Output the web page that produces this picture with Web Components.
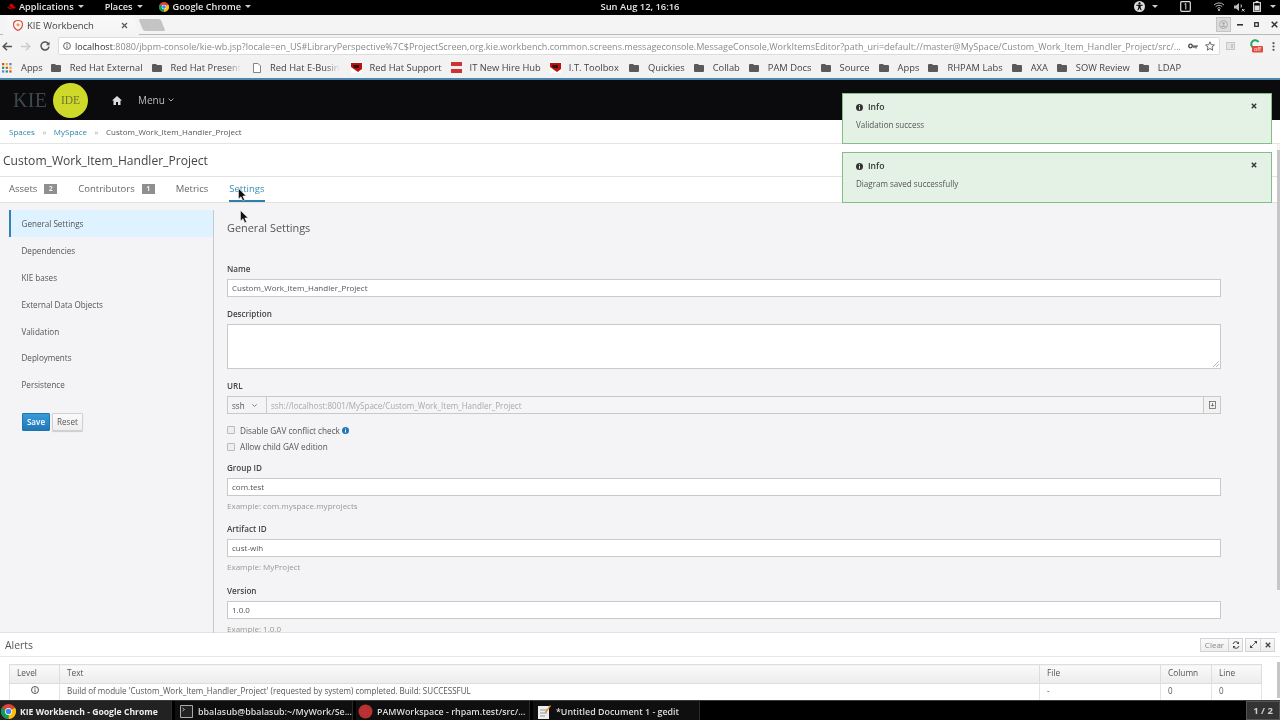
<!DOCTYPE html>
<html lang="en"><head><meta charset="utf-8"><title>KIE Workbench</title>
<style>
html,body{margin:0;padding:0;width:1280px;height:720px;overflow:hidden;background:#fff}
body{font-family:"Open Sans","Liberation Sans",sans-serif;font-size:9px;color:#444;display:flex;flex-direction:column;position:relative;filter:blur(.3px)}
</style></head><body>
<gnome-bar></gnome-bar>
<chrome-tabs></chrome-tabs>
<chrome-toolbar></chrome-toolbar>
<bookmarks-bar></bookmarks-bar>
<kie-header></kie-header>
<kie-breadcrumbs></kie-breadcrumbs>
<project-area></project-area>
<alerts-panel></alerts-panel>
<task-bar></task-bar>
<toast-stack>
  <info-toast>Validation success</info-toast>
  <info-toast>Diagram saved successfully</info-toast>
</toast-stack>
<mouse-cursor style="left:238px;top:188px"></mouse-cursor>
<mouse-cursor style="left:240px;top:210px"></mouse-cursor>
<script>
const CHROME='<svg width="W" height="W" viewBox="0 0 24 24"><circle cx="12" cy="12" r="12" fill="#db4437"/><path d="M12 12L22.4 6A12 12 0 0 1 12 24z" fill="#f4c20d"/><path d="M12 12L12 24A12 12 0 0 1 1.6 6z" fill="#0f9d58"/><circle cx="12" cy="12" r="5.6" fill="#fff"/><circle cx="12" cy="12" r="4.4" fill="#4285f4"/></svg>';
const HAT='<svg width="W" height="W" viewBox="0 0 24 24"><path d="M6 12l2-7c2-1 3 0 4 0s3-1 4 0l2 6c3 1 5 3 5 5 0 2-3 2-6 1-4-1-9-3-11-5z" fill="#cc0000"/><path d="M1 13c0 3 7 7 13 7 2 0 3-1 3-2-5 0-12-3-14-6z" fill="#b00"/></svg>';
const FOLDER='<svg width="10" height="8" viewBox="0 0 10 8"><path d="M0 1a1 1 0 0 1 1-1h3l1 1h4a1 1 0 0 1 1 1v5a1 1 0 0 1-1 1H1a1 1 0 0 1-1-1z" fill="#5a5a5a"/></svg>';
function def(name,css,html,init){
  customElements.define(name,class extends HTMLElement{
    constructor(){super();const r=this.attachShadow({mode:'open'});r.innerHTML='<style>'+css+'</style>'+html;if(init)init(r,this);}
  });
}
def('gnome-bar',`:host{display:grid;grid-template-columns:1fr auto 1fr;align-items:center;height:15px;box-sizing:border-box;padding-bottom:2px;background:#000;color:#e6e6e6;font:600 9.2px "Open Sans",sans-serif;flex:none}
.l{display:flex;align-items:center}.r{display:flex;align-items:center;justify-content:flex-end;height:13px}
.c{font-size:9.4px;position:relative}
i{display:inline-block;width:0;height:0;border:3px solid transparent;border-top:3.5px solid #ccc;border-bottom:0;margin-left:4px}
svg{display:block}`,
`<div class="l"><span style="margin-left:7px;margin-right:3px">${HAT.replace(/W/g,'9')}</span>Applications<i></i><span style="margin-left:21px">Places</span><i></i><span style="margin-left:16px;margin-right:4px">${CHROME.replace(/W/g,'10')}</span>Google Chrome<i></i></div>
<div class="c">Sun Aug 12, 16:16</div>
<div class="r">
<svg width="11" height="11" viewBox="0 0 12 12"><circle cx="6" cy="6" r="6" fill="#ddd"/><circle cx="6" cy="2.6" r="1.2" fill="#000"/><path d="M2.5 4.2h7v1H7.2v2l1.2 3H7.3L6 7.6 4.7 10.200H3.600l1.200-3v-2H2.500z" fill="#000"/></svg><i style="margin-left:7px"></i>
<svg style="margin-left:22px" width="11" height="11" viewBox="0 0 11 11"><rect x=".7" y=".7" width="9.600" height="9.600" rx="1" fill="none" stroke="#ddd" stroke-width="1.200"/><path d="M4.500 3.200l1.300-.7v6" fill="none" stroke="#ddd"/></svg>
<svg style="margin-left:23px" width="10" height="9" viewBox="0 0 10 9"><path d="M0 3a7 7 0 0 1 10 0M1.700 4.700a4.600 4.600 0 0 1 6.600 0M3.400 6.400a2.200 2.200 0 0 1 3.200 0" fill="none" stroke="#bbb"/><circle cx="5" cy="8" r="1" fill="#ddd"/></svg>
<svg style="margin-left:10px" width="11" height="10" viewBox="0 0 11 10"><path d="M0 3.500h2L5 1v8L2 6.500H0z" fill="#bbb"/><path d="M7 2.500a3 3 0 0 1 0 3M8 7l2.500 2.500M10.500 7L8 9.500" stroke="#ddd" fill="none"/></svg>
<svg style="margin-left:8px" width="8" height="11" viewBox="0 0 8 11"><rect x=".6" y="1.600" width="6.800" height="8.800" fill="none" stroke="#ddd" stroke-width="1.100"/><rect x="2.600" y="0" width="2.800" height="1.600" fill="#ddd"/><rect x="1.500" y="4.500" width="5" height="5" fill="#ddd"/></svg>
<i style="margin-left:9px;margin-right:4px"></i></div>`);

def('chrome-tabs',`:host{display:flex;align-items:flex-end;height:20px;background:#f4f4f4;border-bottom:1px solid #b9b9b9;box-sizing:border-box;flex:none;position:relative;font:9.5px "Open Sans",sans-serif;color:#444}
.tab{width:136px;height:19px;margin-left:3px;margin-bottom:-1px;display:flex;align-items:center;background:linear-gradient(#f9f9f9,#f4f4f4);clip-path:polygon(0 100%,5px 0,131px 0,136px 100%);position:relative;flex:none}
.new{width:22px;height:12px;background:#c4c4c4;transform:skewX(22deg);border-radius:2px;margin:0 0 3px 2px;flex:none}
.sp{flex:1}.win{display:flex;align-items:center;height:19px;padding-right:2px;color:#333}
.p{width:13px;height:13px;background:#dcdcdc;border:1px solid #c4c4c4;display:flex;align-items:center;justify-content:center}`,
`<div class="tab"><svg style="margin-left:10px;margin-right:4px" width="10" height="11" viewBox="0 0 10 11"><path d="M5 .5c3 0 4.500 2 4.500 4 0 2.500-2.500 5-4.500 6-2-1-4.500-3.500-4.500-6 0-2 1.500-4 4.500-4z" fill="none" stroke="#d9534f" stroke-width="1.200"/><circle cx="5" cy="4.800" r="1.600" fill="#e8a33a"/></svg>KIE Workbench<svg style="margin-left:27px" width="7" height="7" viewBox="0 0 7 7"><path d="M1 1l5 5M6 1L1 6" stroke="#555" stroke-width="1.200"/></svg></div><div class="new"></div><div class="sp"></div>
<div class="win"><div class="p"><svg width="9" height="9" viewBox="0 0 9 9"><circle cx="4.500" cy="4.500" r="4" fill="none" stroke="#aaa"/><circle cx="4.500" cy="3.400" r="1.300" fill="#aaa"/><path d="M2 7c1-2 4-2 5 0" fill="#aaa"/></svg></div>
<svg style="margin-left:6px" width="6" height="3" viewBox="0 0 6 3"><rect width="6" height="1.600" y="1" fill="#333"/></svg>
<svg style="margin-left:11px" width="5" height="5" viewBox="0 0 5 5"><rect x=".7" y=".7" width="3.600" height="3.600" fill="none" stroke="#333" stroke-width="1.300"/></svg>
<svg style="margin-left:12px" width="7" height="7" viewBox="0 0 7 7"><path d="M.7.700l5.600 5.600M6.300.7L.7 6.300" stroke="#333" stroke-width="1.500"/></svg></div>`);

def('chrome-toolbar',`:host{display:flex;align-items:center;height:22px;background:#f3f3f3;flex:none;font:9.05px "Open Sans",sans-serif}
.nav{width:58px;flex:none;display:flex;align-items:center}
.addr{width:1162px;height:18px;background:#fff;border:1px solid #dcdcdc;border-radius:2px;box-sizing:border-box;display:flex;align-items:center;flex:none}
.u{flex:1;min-width:0;white-space:nowrap;color:#8a8a8a;margin-left:4px}.u b{font-weight:400;color:#333}
.end{display:flex;align-items:center;flex:none}`,
`<div class="nav"><svg style="margin-left:2px" width="10" height="9" viewBox="0 0 10 9"><path d="M10 4.500H1.500M5 .8L1.200 4.500 5 8.200" fill="none" stroke="#555" stroke-width="1.500"/></svg>
<svg style="margin-left:9px" width="10" height="9" viewBox="0 0 10 9"><path d="M0 4.500h8.500M5 .8l3.800 3.700L5 8.200" fill="none" stroke="#ccc" stroke-width="1.500"/></svg>
<svg style="margin-left:9px" width="10" height="10" viewBox="0 0 10 10"><path d="M8.700 3.300A4 4 0 1 0 9 5.500" fill="none" stroke="#555" stroke-width="1.500"/><path d="M9.500 .8v3.500H6z" fill="#555"/></svg></div>
<div class="addr"><svg style="margin-left:4px;flex:none" width="8" height="8" viewBox="0 0 8 8"><circle cx="4" cy="4" r="3.400" fill="none" stroke="#555" stroke-width=".9"/><path d="M4 3.400v2.600M4 1.800v1" stroke="#555" stroke-width=".9"/></svg><div class="u"><b>localhost</b>:8080/jbpm-console/kie-wb.jsp?locale=en_US#LibraryPerspective%7C$ProjectScreen,org.kie.workbench.common.screens.messageconsole.MessageConsole,WorkItemsEditor?path_uri=default://master@MySpace/Custom_Work_Item_Handler_Project/src/...</div>
<div class="end"><svg width="10" height="6" viewBox="0 0 10 6"><circle cx="2.500" cy="3" r="1.800" fill="none" stroke="#444" stroke-width="1.300"/><path d="M4.500 3H10M8 3v2.500M6 3v2" stroke="#444" stroke-width="1.200"/></svg><svg style="margin:0 4px 0 7px" width="10" height="10" viewBox="0 0 10 10"><path d="M5 .8l1.250 2.900 3.150.3-2.400 2.050.75 3.100L5 7.500 2.250 9.150 3 6.050.6 4l3.150-.3z" fill="none" stroke="#555" stroke-width=".9"/></svg></div></div>
<svg style="margin-left:6px" width="9" height="8" viewBox="0 0 9 8"><rect x=".5" y=".5" width="8" height="7" fill="#e4e4e4" stroke="#c6c6c6"/><rect x="5" y="2" width="2" height="4" fill="#c6c6c6"/></svg>
<svg style="margin-left:13px" width="15" height="14" viewBox="0 0 15 14"><path d="M10.500 3A4 4 0 1 0 10.500 7.500" fill="none" stroke="#22a565" stroke-width="2"/><rect x="4" y="7" width="11" height="6.500" rx="1" fill="#e04b42"/><text x="9.500" y="12" font-size="5.500" fill="#fff" text-anchor="middle" font-family="Open Sans">off</text></svg>
<svg style="margin-left:9px" width="3" height="9" viewBox="0 0 3 9"><circle cx="1.500" cy="1.200" r="1.100" fill="#555"/><circle cx="1.500" cy="4.500" r="1.100" fill="#555"/><circle cx="1.500" cy="7.800" r="1.100" fill="#555"/></svg>`);

def('bookmarks-bar',`:host{display:flex;align-items:center;height:21px;background:#f2f2f2;border-bottom:2px solid #4a86ad;flex:none;font:9.35px "Open Sans",sans-serif;color:#444;box-shadow:0 1px 0 #aac}
.b{display:flex;align-items:center;white-space:nowrap;margin-left:9px;flex:none}.b svg{margin-right:9px;flex:none;display:block}
.f{display:block;-webkit-mask-image:linear-gradient(90deg,#000 80%,transparent);mask-image:linear-gradient(90deg,#000 80%,transparent)}`,
'',(r)=>{
 const RH='<svg width="11" height="11" viewBox="0 0 11 11" style="margin-right:8px"><rect width="11" height="11" fill="#fff"/><path d="M0 1h11v6L7 10 0 5z" fill="#b11"/><path d="M2 3h6v3H3z" fill="#311"/></svg>';
 const NOW='<svg width="11" height="11" viewBox="0 0 11 11" style="margin-right:8px"><rect width="11" height="11" fill="#c33"/><rect y="4" width="11" height="3" fill="#eee"/></svg>';
 const DOC='<svg width="8" height="10" viewBox="0 0 8 10" style="margin-left:3px"><path d="M.5.500h4.500l2.500 2.500v6.500h-7z" fill="#fff" stroke="#666" stroke-width=".8"/></svg>';
 const APPS='<svg width="10" height="10" viewBox="0 0 9 9">'+[0,1,2].flatMap(a=>[0,1,2].map(b=>`<rect x="${b*3.3}" y="${a*3.3}" width="2" height="2" fill="${['#db4437','#f4b400','#4285f4','#0f9d58','#db4437','#f4b400','#4285f4','#0f9d58','#db4437'][a*3+b]}"/>`)).join('')+'</svg>';
 const items=[[APPS,'Apps',0,2],[FOLDER,'Red Hat External',0,8],[FOLDER,'Red Hat Present',1,9],[DOC,'Red Hat E-Busin',1,9],[RH,'Red Hat Support',0,11],[NOW,'IT New Hire Hub',0,9],[RH,'I.T. Toolbox',0,9],[FOLDER,'Quickies',0,10],[FOLDER,'Collab',0,9],[FOLDER,'PAM Docs',0,9],[FOLDER,'Source',0,9],[FOLDER,'Apps',0,9],[FOLDER,'RHPAM Labs',0,9],[FOLDER,'AXA',0,9],[FOLDER,'SOW Review',0,9],[FOLDER,'LDAP',0,9]];
 r.innerHTML+=items.map(([i,t,w,m])=>`<div class="b" style="margin-left:${m}px">${i}<span class="${w?'f':''}">${t}</span></div>`).join('');
});

def('kie-header',`:host{display:flex;align-items:center;height:40px;background:#0b0b0d;flex:none;color:#ccc;font:10px "Open Sans",sans-serif}
.k{font:20px "Liberation Serif",serif;color:#3d484c;margin-left:13px;width:35px;letter-spacing:.3px}
.i{width:35px;height:35px;border-radius:50%;background:#ced92a;margin-left:5px;display:flex;align-items:center;justify-content:center;font:11.500px "Liberation Serif",serif;color:#6d7532}
.m{margin-left:16px;display:flex;align-items:center;color:#bbb}`,
`<div class="k">KIE</div><div class="i">IDE</div><svg style="margin-left:24px" width="10" height="9" viewBox="0 0 10 9"><path d="M5 0L0 4.500h1.500V9h2.500V6h2v3h2.500V4.500H10z" fill="#ddd"/></svg><div class="m">Menu<svg style="margin-left:3px" width="6" height="4" viewBox="0 0 6 4"><path d="M.6.600L3 3l2.400-2.400" fill="none" stroke="#aaa"/></svg></div>`);

def('kie-breadcrumbs',`:host{display:flex;align-items:center;height:24px;box-sizing:border-box;background:#fff;border-bottom:1px solid #e4e4e4;flex:none;padding:0 0 0 9px;font:8px "Open Sans",sans-serif;color:#555}
a{color:#2f87a8}s{text-decoration:none;color:#aaa;margin:0 7.5px;font-size:8px}`,
`<a>Spaces</a><s>&raquo;</s><a>MySpace</a><s>&raquo;</s><span>Custom_Work_Item_Handler_Project</span>`);

def('project-tabs',`:host{display:flex;height:26px;box-sizing:border-box;border-bottom:1px solid #e2e2e2;background:#fff;flex:none;font:9.5px "Open Sans",sans-serif;color:#666;padding-left:9px}
.t{display:flex;align-items:center;height:25px;margin-right:21px;box-sizing:border-box;padding-bottom:2px}
.t b{font:700 7px "Open Sans",sans-serif;background:#8f8f8f;color:#eee;width:13px;height:10px;margin-left:7px;display:flex;align-items:center;justify-content:center}
.a{color:#3a8fb7;border-bottom:2px solid #2f7fa8;padding-bottom:0;height:25px}`,
`<div class="t">Assets<b>2</b></div><div class="t">Contributors<b>1</b></div><div class="t">Metrics</div><div class="t a">Settings</div>`);

def('side-nav',`:host{display:block;width:214px;box-sizing:border-box;flex:none;padding-top:7px;font:8.1px "Open Sans",sans-serif;color:#555}
.list{margin-left:9px;border-right:1px solid #c9c9c9;height:426px;box-sizing:border-box}
.n{height:26.800px;display:flex;align-items:center;padding-left:12.500px;box-sizing:border-box}
.n.a{background:#def3ff;border-left:2px solid #2f83b5;padding-left:10.500px;height:27.300px}
.btns{display:flex;gap:2px;margin:14.700px 0 0 13px}
.btn{height:18px;display:flex;align-items:center;justify-content:center;box-sizing:border-box;border-radius:1px}
.s{width:28px;color:#fff;background:linear-gradient(#3a9ad9,#1f78b8);font-weight:600;border:1px solid #2272ac}
.r{width:31px;color:#555;background:linear-gradient(#fafafa,#eee);border:1px solid #d0d0d0;box-shadow:0 1px 1px #ccc}`,
`<div class="list"><div class="n a">General Settings</div><div class="n">Dependencies</div><div class="n">KIE bases</div><div class="n">External Data Objects</div><div class="n">Validation</div><div class="n">Deployments</div><div class="n">Persistence</div><div class="btns"><div class="btn s">Save</div><div class="btn r">Reset</div></div></div>`);

def('form-field',`:host{display:block;font:8.1px "Open Sans",sans-serif;color:#444}
label{display:block;font-weight:600;height:11px;line-height:11px;margin-bottom:5px;color:#444}
.h{font:400 8px "Open Sans",sans-serif;color:#999;height:11px;line-height:11px;margin-top:4px}`,
`<label></label><slot></slot><div class="h"></div>`,
(r,el)=>{queueMicrotask(()=>{r.querySelector('label').textContent=el.getAttribute('label')||'';const h=r.querySelector('.h');const t=el.getAttribute('hint');if(t)h.textContent=t;else h.remove();});});

def('text-input',`:host{display:block;height:18px;box-sizing:border-box;background:#fff;border:1px solid #c9c9c9;padding-left:4px;font:8px/16px "Open Sans",sans-serif;color:#555;white-space:nowrap;overflow:hidden}`,`<slot></slot>`);

def('check-row',`:host{display:flex;align-items:center;height:16.500px;font:8.2px "Open Sans",sans-serif;color:#555}
i{width:6px;height:6px;border:1px solid #bbb;background:#eee;border-radius:1px;margin-right:5px;flex:none}`,`<i></i><slot></slot>`);

def('settings-form',`:host{display:block;flex:1;min-width:0;padding:0 56px 0 13px;overflow:hidden;height:430px;box-sizing:border-box}
h2{font:400 10.900px "Open Sans",sans-serif;color:#555;margin:0;padding-top:18px;line-height:14px;height:14px;margin-bottom:28px}
form-field{margin-bottom:11px}
form-field.hint{margin-bottom:13px}
form-field.hint.first{margin-bottom:12px}
.ta{height:45px;background:#fff;border:1px solid #c9c9c9;box-sizing:border-box;position:relative}
.ta svg{position:absolute;right:1px;bottom:1px}
.url{display:flex;height:18px;font:8.05px "Open Sans",sans-serif}
.sel{width:40px;box-sizing:border-box;border:1px solid #c9c9c9;background:#f4f3f5;color:#555;display:flex;align-items:center;padding-left:4px;flex:none}
.val{flex:1;border:1px solid #c9c9c9;border-left:0;background:#f5f4f6;color:#aaa;padding-left:4px;display:flex;align-items:center}
.cp{width:16px;flex:none;border:1px solid #c9c9c9;border-left:0;background:#f2f2f2;display:flex;align-items:center;justify-content:center}
.checks{margin:8px 0 7px}
.checks svg{margin-left:2px}
.u{margin-bottom:0}`,
`<h2>General Settings</h2>
<form-field label="Name"><text-input>Custom_Work_Item_Handler_Project</text-input></form-field>
<form-field label="Description"><div class="ta"><svg width="6" height="6" viewBox="0 0 6 6"><path d="M0 6l6-6M3 6l3-3" stroke="#999" stroke-width=".7"/></svg></div></form-field>
<form-field class="u" label="URL"><div class="url"><div class="sel">ssh<svg style="margin-left:7px" width="5" height="3" viewBox="0 0 5 3"><path d="M.3.300L2.500 2.500 4.700.3" fill="none" stroke="#666" stroke-width=".8"/></svg></div><div class="val">ssh://localhost:8001/MySpace/Custom_Work_Item_Handler_Project</div><div class="cp"><svg width="7" height="8" viewBox="0 0 7 8"><rect x=".5" y=".5" width="6" height="7" fill="none" stroke="#666" stroke-width=".8"/><path d="M3.500 2v3.500M2 4.500h3" stroke="#666" stroke-width=".8"/></svg></div></div></form-field>
<div class="checks"><check-row>Disable GAV conflict check<svg width="7" height="7" viewBox="0 0 7 7"><circle cx="3.500" cy="3.500" r="3.500" fill="#1f78b8"/><path d="M3.500 3v2.500M3.500 1.500v.9" stroke="#fff"/></svg></check-row><check-row>Allow child GAV edition</check-row></div>
<form-field class="hint first" label="Group ID" hint="Example: com.myspace.myprojects"><text-input>com.test</text-input></form-field>
<form-field class="hint" label="Artifact ID" hint="Example: MyProject"><text-input>cust-wih</text-input></form-field>
<form-field class="hint" label="Version" hint="Example: 1.0.0"><text-input>1.0.0</text-input></form-field>`);

def('project-area',`:host{display:flex;flex:none;height:489px;background:#fff}
.col{flex:1;min-width:0;display:flex;flex-direction:column}
h1{margin:0;font:400 12.100px "Open Sans",sans-serif;color:#444;height:33px;line-height:33px;padding-left:3px;border-bottom:1px solid #e2e2e2;box-sizing:border-box;flex:none}
.main{flex:1;display:flex;background:#f4f3f5;border-bottom:1px solid #e2e2e2;min-height:0}
.sb{width:3px;background:#f4f3f5;flex:none;display:flex;flex-direction:column}
.th{height:440px;margin-top:6px;background:#c6c6c6}`,
`<div class="col"><h1>Custom_Work_Item_Handler_Project</h1><project-tabs></project-tabs><div class="main"><side-nav></side-nav><settings-form></settings-form></div></div><div class="sb"><div class="th"></div></div>`);

def('alerts-panel',`:host{display:flex;flex-direction:column;height:67px;background:#fff;flex:none;font:8.3px "Open Sans",sans-serif;color:#555;position:relative;overflow:hidden}
.hd{display:flex;align-items:center;height:24px;box-sizing:border-box;border-bottom:1px solid #e6e6e6;padding:0 5px;flex:none}
.ti{font-size:10.400px;color:#555;flex:1}
.g{display:flex;height:14px;margin-left:3px}
.bt{border:1px solid #d4d4d4;background:linear-gradient(#fafafa,#eee);display:flex;align-items:center;justify-content:center;box-sizing:border-box;margin-left:-1px;color:#888;font-size:8px}
table{border-collapse:collapse;table-layout:fixed;width:1252px;margin:7px 0 0 9px}
th{height:19px;font-weight:400;text-align:left;padding:0 0 3px 7px;background:linear-gradient(#fafafa,#ececec);border:1px solid #ddd;color:#555;box-sizing:border-box}
td{height:17px;padding:0 0 3px 7px;border:1px solid #e4e4e4;border-bottom:0;box-sizing:border-box;color:#555;font-size:8.050px;white-space:nowrap}
.sb{position:absolute;right:0;top:29px;width:3px;height:36px;background:#c6c6c6}`,
`<div class="hd"><div class="ti">Alerts</div><div class="g"><div class="bt" style="width:29px">Clear</div><div class="bt" style="width:15px"><svg width="8" height="8" viewBox="0 0 8 8"><path d="M1 3a3 3 0 0 1 5.500-.8M7 5a3 3 0 0 1-5.500.8" fill="none" stroke="#444"/><path d="M7 .5v2.500H4.500zM1 7.500V5h2.500z" fill="#444"/></svg></div></div><div class="g"><div class="bt" style="width:16px"><svg width="7" height="7" viewBox="0 0 7 7"><path d="M1 6l5-5" stroke="#444" stroke-width=".8"/><path d="M7 0v3L4 0zM0 7V4l3 3z" fill="#444"/></svg></div><div class="bt" style="width:15px"><svg width="6" height="6" viewBox="0 0 6 6"><path d="M.8.800l4.400 4.400M5.200.8L.8 5.200" stroke="#444" stroke-width="1.300"/></svg></div></div></div>
<table><colgroup><col style="width:50px"><col style="width:980px"><col style="width:121px"><col style="width:51px"><col style="width:50px"></colgroup>
<tr><th>Level</th><th>Text</th><th>File</th><th>Column</th><th>Line</th></tr>
<tr><td style="padding:0 0 3px;text-align:center"><svg width="8" height="8" viewBox="0 0 8 8"><circle cx="4" cy="4" r="3.500" fill="none" stroke="#444" stroke-width=".9"/><path d="M4 3.300V6.200M4 1.800v.9" stroke="#444" stroke-width=".9"/></svg></td><td>Build of module 'Custom_Work_Item_Handler_Project' (requested by system) completed. Build: SUCCESSFUL</td><td>-</td><td>0</td><td>0</td></tr></table>
<div class="sb"></div>`);

def('task-bar',`:host{display:flex;align-items:center;height:20px;background:#000;border-top:1px solid #3a3a3a;box-sizing:border-box;flex:none;color:#ddd;font:600 8.900px "Open Sans",sans-serif;position:relative}
.it{margin-right:3px;height:19px;display:flex;align-items:center;box-sizing:border-box;padding-top:2px;background:#0f0f0f;flex:none;white-space:nowrap;overflow:hidden;border-right:1px solid #2a2a2a}
.it svg{flex:none}
.it.a{background:#222;font-weight:700;font-size:8.650px;color:#eee}
.sp{flex:1}
.pg{width:34px;height:19px;background:#333;border:1px solid #555;box-sizing:border-box;display:flex;align-items:center;justify-content:center;font-weight:700;color:#ccc;font-size:9.500px}`,
`<div class="it a" style="width:172px;padding-left:1px"><span style="margin-right:4px;display:flex">${CHROME.replace(/W/g,'15')}</span>KIE Workbench - Google Chrome</div>
<div class="it" style="width:178px;padding-left:5px"><svg style="margin-right:5px" width="13" height="13" viewBox="0 0 13 13"><rect width="13" height="13" rx="1" fill="#aaa"/><rect x="1" y="1" width="11" height="11" fill="#222"/><path d="M2.500 3l2 1.500-2 1.500" stroke="#ccc" fill="none" stroke-width=".8"/></svg>bbalasub@bbalasub:~/MyWork/Se...</div>
<div class="it" style="width:174px;padding-left:2px"><svg style="margin-right:4px" width="15" height="15" viewBox="0 0 15 15"><circle cx="7.500" cy="7.500" r="7" fill="#b5332e"/><path d="M2 6h11M2 9h11M7 1v13" stroke="#e27" stroke-width=".6" opacity=".5"/></svg>PAMWorkspace - rhpam.test/src/...</div>
<div class="it" style="width:167px;padding-left:4px"><svg style="margin-right:5px" width="14" height="15" viewBox="0 0 14 15"><rect x="1" y="2" width="11" height="13" fill="#eee"/><path d="M3 6h7M3 9h7M3 12h5" stroke="#999"/><path d="M8 8l5-7 1 1-5 7z" fill="#e08a2c"/></svg>*Untitled Document 1 - gedit</div>
<div class="sp"></div><div class="pg">1 / 2</div>`);

def('toast-stack',`:host{position:absolute;left:842px;top:93px;width:430px;display:flex;flex-direction:column;gap:8px}`,`<slot></slot>`);
def('info-toast',`:host{display:block;height:51px;box-sizing:border-box;background:#e4f2e5;border:1px solid #84bd88;position:relative;font:8.05px "Open Sans",sans-serif;color:#555;padding:7px 13px}
.h{display:flex;align-items:center;font-weight:600;font-size:8.6px;color:#333;height:12px;margin-bottom:6px}
.h svg{margin-right:4px}
.x{position:absolute;right:14px;top:9px}`,
`<div class="h"><svg width="7" height="7" viewBox="0 0 7 7"><circle cx="3.500" cy="3.500" r="3.500" fill="#333"/><path d="M3.500 3v2.700M3.500 1.200v1" stroke="#eee" stroke-width="1"/></svg><span style="margin-left:1px">Info</span></div><slot></slot><svg class="x" width="6" height="6" viewBox="0 0 6 6"><path d="M.8.800l4.400 4.400M5.200.8L.8 5.200" stroke="#333" stroke-width="1.400"/></svg>`);
def('mouse-cursor',`:host{position:absolute;width:9px;height:13px;display:block}svg{display:block}`,`<svg width="9" height="13" viewBox="0 0 9 13"><path d="M.5.500v10.500l2.500-2.300 1.800 4 1.800-.8-1.800-3.900 3.300-.1z" fill="#111" stroke="#fff" stroke-width=".5"/></svg>`);
</script>
</body></html>
